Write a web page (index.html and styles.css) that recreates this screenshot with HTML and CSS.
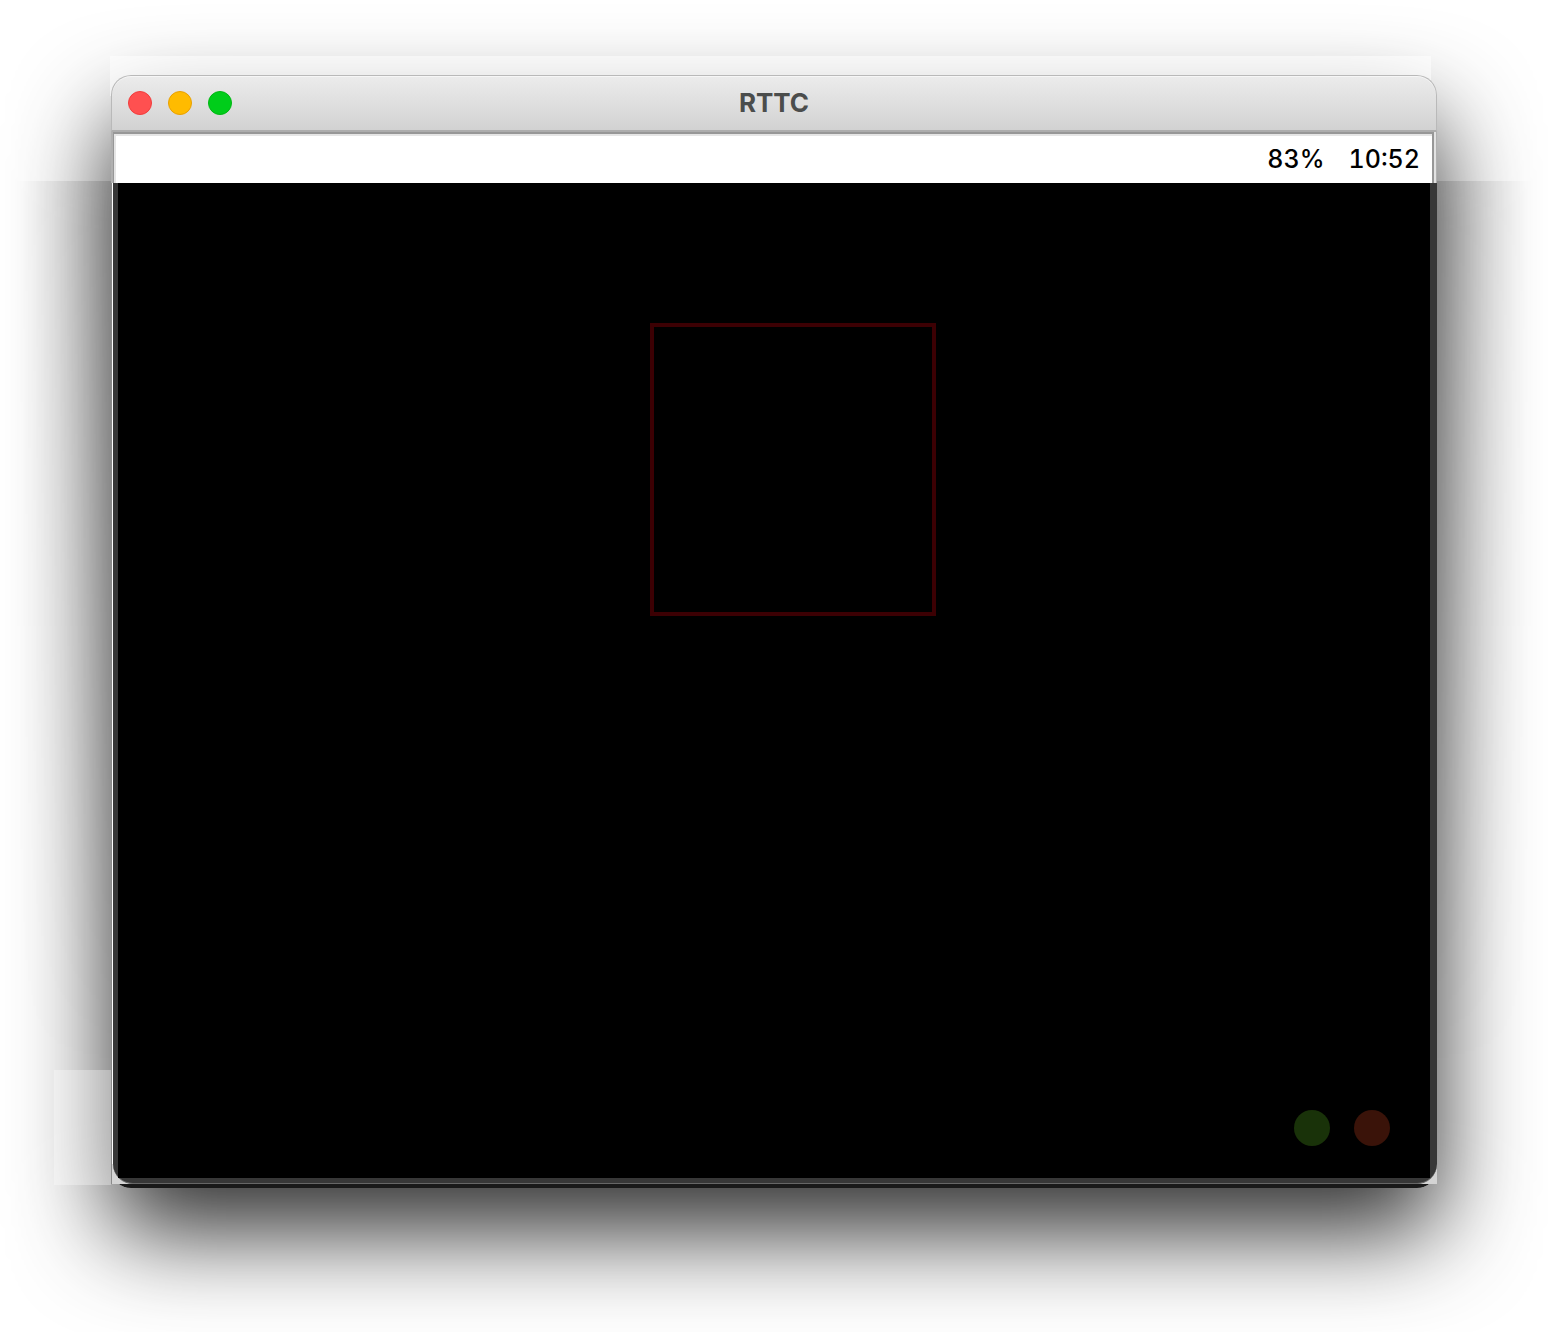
FILE: index.html
```html
<!DOCTYPE html>
<html lang="en">
<head>
<meta charset="utf-8">
<title>RTTC</title>
<link rel="stylesheet" href="styles.css">
</head>
<body>
<div class="shadow-patches" aria-hidden="true">
  <span class="patch patch-top"></span>
  <span class="patch patch-left"></span>
  <span class="patch patch-right"></span>
  <span class="patch patch-corner"></span>
</div>
<main class="window">
  <header class="titlebar">
    <div class="controls">
      <button class="control close" type="button" aria-label="Close"></button>
      <button class="control minimize" type="button" aria-label="Minimize"></button>
      <button class="control zoom" type="button" aria-label="Zoom"></button>
    </div>
    <h1 class="title">RTTC</h1>
  </header>
  <div class="status-frame">
    <div class="status">
      <span>83%</span>
      <time>10:52</time>
    </div>
  </div>
  <section class="backing">
    <div class="bezel">
      <div class="screen">
        <div class="target"></div>
        <div class="actions">
          <button class="action accept" type="button" aria-label="Accept"></button>
          <button class="action decline" type="button" aria-label="Decline"></button>
        </div>
      </div>
    </div>
  </section>
</main>
</body>
</html>
```
FILE: styles.css
```css
* { box-sizing: border-box; }

body {
  position: relative;
  display: flex;
  min-height: 100vh;
  margin: 0;
  padding: 75px 111px 144px;
  overflow: hidden;
  background: #fff;
  font-family: Inter, "Liberation Sans", sans-serif;
}

.window {
  display: flex;
  flex: 1;
  flex-direction: column;
  padding-bottom: 4px;
  border-radius: 20px;
  background: linear-gradient(#191919, #191919) bottom / 100% 40px no-repeat;
  box-shadow: 0 44px 96px rgba(0, 0, 0, 0.82);
}

/* Uneven tiles of the window shadow */
.shadow-patches {
  position: absolute;
  inset: 0;
  z-index: 1;
  pointer-events: none;
}

.patch { position: absolute; }

.patch-top {
  top: 56px;
  left: 110px;
  right: 117px;
  height: 40px;
  background: rgba(255, 255, 255, 0.5);
}

.patch-left,
.patch-right {
  top: 181px;
  bottom: 262px;
  width: 95px;
  -webkit-mask-image: linear-gradient(#000, transparent);
  mask-image: linear-gradient(#000, transparent);
}

.patch-left {
  left: 16px;
  background: linear-gradient(to left, rgba(0, 0, 0, 0.14), rgba(0, 0, 0, 0));
}

.patch-right {
  right: 16px;
  background: linear-gradient(to right, rgba(0, 0, 0, 0.14), rgba(0, 0, 0, 0));
}

.patch-corner {
  left: 54px;
  bottom: 147px;
  width: 57px;
  height: 115px;
  background: rgba(255, 255, 255, 0.32);
}

.titlebar {
  position: relative;
  z-index: 2;
  display: grid;
  grid-template-columns: 1fr auto 1fr;
  align-items: center;
  height: 57px;
  padding: 0 16px;
  border: 1px solid #b9b9b9;
  border-bottom: 2px solid #adadad;
  border-radius: 20px 20px 0 0;
  background: linear-gradient(#ececec, #d2d2d2);
  box-shadow: inset 0 1px #f6f6f6;
}

.controls {
  display: flex;
  gap: 16px;
}

.control {
  width: 24px;
  height: 24px;
  padding: 0;
  border: 1px solid;
  border-radius: 50%;
}

.close { border-color: #f23c3c; background: #ff5050; }
.minimize { border-color: #e9a000; background: #ffbb00; }
.zoom { border-color: #00b712; background: #00cd1a; }

.title {
  margin: 0;
  color: #4b4d4c;
  font-size: 26px;
  line-height: 32px;
  font-weight: 700;
}

.status-frame {
  position: relative;
  z-index: 2;
  height: 51px;
  border: 1px solid #b0b0b0;
  border-width: 0 1px 0 2px;
  padding-right: 2px;
  background: #e2e2e2;
}

.status {
  display: flex;
  align-items: center;
  justify-content: flex-end;
  gap: 24px;
  height: 51px;
  padding-right: 12px;
  border: 2px solid #979797;
  border-bottom: 0;
  border-left-width: 1px;
  background: #fff;
  box-shadow: inset 2px 2px #e5e5e5;
  color: #000;
  font-size: 25px;
  line-height: 32px;
  font-weight: 500;
  font-variant-numeric: tabular-nums;
}

/* Light backing seen beside the rounded lower corners */
.backing {
  position: relative;
  z-index: 2;
  display: flex;
  flex: 1;
  padding-left: 1px;
  border-left: 1px solid #8a8a8a;
  background: linear-gradient(#fff, #fff) top / 100% calc(100% - 20px) no-repeat, #d4d4d4;
}

.bezel {
  display: flex;
  flex: 1;
  padding: 0 7px 5px 5px;
  border-bottom: 1px solid #666;
  border-radius: 0 0 20px 20px;
  background: #373737;
}

.screen {
  position: relative;
  display: flex;
  flex: 1;
  align-items: flex-end;
  justify-content: flex-end;
  padding: 0 40px 32px 0;
  background: #000;
}

.target {
  position: absolute;
  top: 140px;
  left: calc(50% - 124px);
  width: 286px;
  height: 293px;
  border: 4px solid #3c0003;
}

.actions {
  display: flex;
  gap: 24px;
}

.action {
  width: 36px;
  height: 36px;
  padding: 0;
  border: 0;
  border-radius: 50%;
}

.accept { background: #193209; }
.decline { background: #3a1309; }
```
